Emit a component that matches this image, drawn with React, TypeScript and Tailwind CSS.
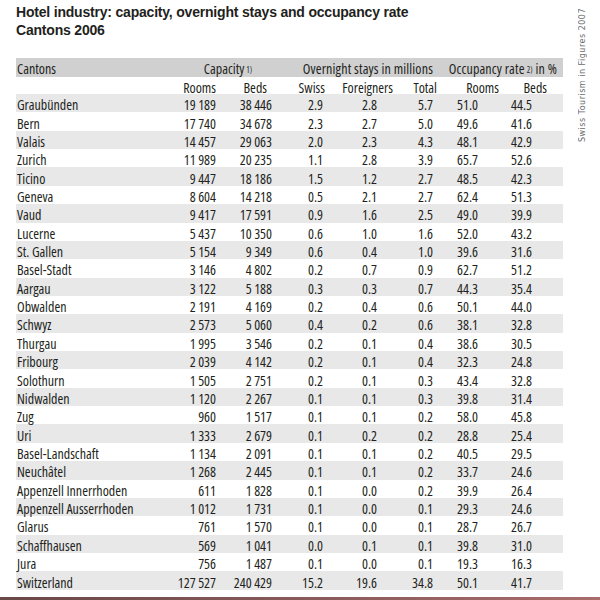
import React from 'react';

type Row = [string, string, string, string, string, string, string, string];

const rows: Row[] = [
  ['Graubünden', '19 189', '38 446', '2.9', '2.8', '5.7', '51.0', '44.5'],
  ['Bern', '17 740', '34 678', '2.3', '2.7', '5.0', '49.6', '41.6'],
  ['Valais', '14 457', '29 063', '2.0', '2.3', '4.3', '48.1', '42.9'],
  ['Zurich', '11 989', '20 235', '1.1', '2.8', '3.9', '65.7', '52.6'],
  ['Ticino', '9 447', '18 186', '1.5', '1.2', '2.7', '48.5', '42.3'],
  ['Geneva', '8 604', '14 218', '0.5', '2.1', '2.7', '62.4', '51.3'],
  ['Vaud', '9 417', '17 591', '0.9', '1.6', '2.5', '49.0', '39.9'],
  ['Lucerne', '5 437', '10 350', '0.6', '1.0', '1.6', '52.0', '43.2'],
  ['St. Gallen', '5 154', '9 349', '0.6', '0.4', '1.0', '39.6', '31.6'],
  ['Basel-Stadt', '3 146', '4 802', '0.2', '0.7', '0.9', '62.7', '51.2'],
  ['Aargau', '3 122', '5 188', '0.3', '0.3', '0.7', '44.3', '35.4'],
  ['Obwalden', '2 191', '4 169', '0.2', '0.4', '0.6', '50.1', '44.0'],
  ['Schwyz', '2 573', '5 060', '0.4', '0.2', '0.6', '38.1', '32.8'],
  ['Thurgau', '1 995', '3 546', '0.2', '0.1', '0.4', '38.6', '30.5'],
  ['Fribourg', '2 039', '4 142', '0.2', '0.1', '0.4', '32.3', '24.8'],
  ['Solothurn', '1 505', '2 751', '0.2', '0.1', '0.3', '43.4', '32.8'],
  ['Nidwalden', '1 120', '2 267', '0.1', '0.1', '0.3', '39.8', '31.4'],
  ['Zug', '960', '1 517', '0.1', '0.1', '0.2', '58.0', '45.8'],
  ['Uri', '1 333', '2 679', '0.1', '0.2', '0.2', '28.8', '25.4'],
  ['Basel-Landschaft', '1 134', '2 091', '0.1', '0.1', '0.2', '40.5', '29.5'],
  ['Neuchâtel', '1 268', '2 445', '0.1', '0.1', '0.2', '33.7', '24.6'],
  ['Appenzell Innerrhoden', '611', '1 828', '0.1', '0.0', '0.2', '39.9', '26.4'],
  ['Appenzell Ausserrhoden', '1 012', '1 731', '0.1', '0.0', '0.1', '29.3', '24.6'],
  ['Glarus', '761', '1 570', '0.1', '0.0', '0.1', '28.7', '26.7'],
  ['Schaffhausen', '569', '1 041', '0.0', '0.1', '0.1', '39.8', '31.0'],
  ['Jura', '756', '1 487', '0.1', '0.0', '0.1', '19.3', '16.3'],
  ['Switzerland', '127 527', '240 429', '15.2', '19.6', '34.8', '50.1', '41.7'],
];

// widths of the data columns after the canton name
const colW = ['w-[58px]', 'w-[56px]', 'w-[51px]', 'w-[54px]', 'w-[56px]', 'w-[45px]', 'w-[54px]'];

// thousands group separated by a thin gap, as in the printed table
function Num({ v }: { v: string }) {
  const parts = v.split(' ');
  if (parts.length === 1) return <>{v}</>;
  return (
    <>
      {parts[0]}
      <span className="inline-block w-[2.5px]" />
      {parts[1]}
    </>
  );
}

function Sup({ children }: { children: React.ReactNode }) {
  return <sup className="relative -top-[1px] ml-[2px] text-[8px]">{children}</sup>;
}

export default function App() {
  return (
    <div className="flex h-[600px] w-[600px] flex-col bg-white text-[#231f20]">
      <div className="flex flex-1">
        <div className="w-[563px] pl-[16px]">
          <h1 className="pt-[3px] font-['Liberation_Sans',Arial,sans-serif] text-[14px] leading-[18px] font-bold tracking-[-0.2px]">
            Hotel industry: capacity, overnight stays and occupancy rate
            <br />
            Cantons 2006
          </h1>

          <div className="mt-[19px] font-['Open_Sans',sans-serif] text-[14px] leading-none [font-stretch:75%]">
            <div className="flex h-[19px] items-center bg-[#d0d0d0] pt-[3px]">
              <div className="w-[144px] pl-[1px]">Cantons</div>
              <div className="w-[92px] text-right">
                Capacity<Sup>1)</Sup>
              </div>
              <div className="w-[181px] text-right tracking-[0.15px]">Overnight stays in millions</div>
              <div className="w-[124px] text-right tracking-[0.15px]">
                Occupancy rate<Sup>2)</Sup> in %
              </div>
            </div>
            <div className="flex h-[17px] items-center pt-[4px]">
              <div className="w-[144px]" />
              <div className="w-[56px] text-right">Rooms</div>
              <div className="w-[51px] text-right">Beds</div>
              <div className="w-[58px] text-right">Swiss</div>
              <div className="w-[68px] text-right">Foreigners</div>
              <div className="w-[44px] text-right">Total</div>
              <div className="w-[62px] text-right">Rooms</div>
              <div className="w-[48px] text-right">Beds</div>
            </div>
            {rows.map((r, i) => (
              <div
                key={r[0]}
                className={`flex h-[18.37px] items-center pt-[4px] ${i % 2 === 0 ? 'bg-[#e8e8e9]' : 'bg-white'}`}
              >
                <div className="w-[144px] pl-[1px] whitespace-nowrap">{r[0]}</div>
                {r.slice(1).map((v, j) => (
                  <div key={j} className={`${colW[j]} pr-[2px] text-right whitespace-nowrap`}>
                    <Num v={v} />
                  </div>
                ))}
              </div>
            ))}
          </div>
        </div>
        <div className="flex w-[37px] justify-center pt-[8px] pl-[2px]">
          <div className="h-fit rotate-180 font-['DejaVu_Sans',sans-serif] text-[8px] leading-none tracking-[0.5px] text-[#6a6a6a] [writing-mode:vertical-rl]">
            Swiss Tourism in Figures 2007
          </div>
        </div>
      </div>
      <div className="h-[3px] bg-gradient-to-r from-[#6a4848] to-[#a86c6c]" />
    </div>
  );
}
